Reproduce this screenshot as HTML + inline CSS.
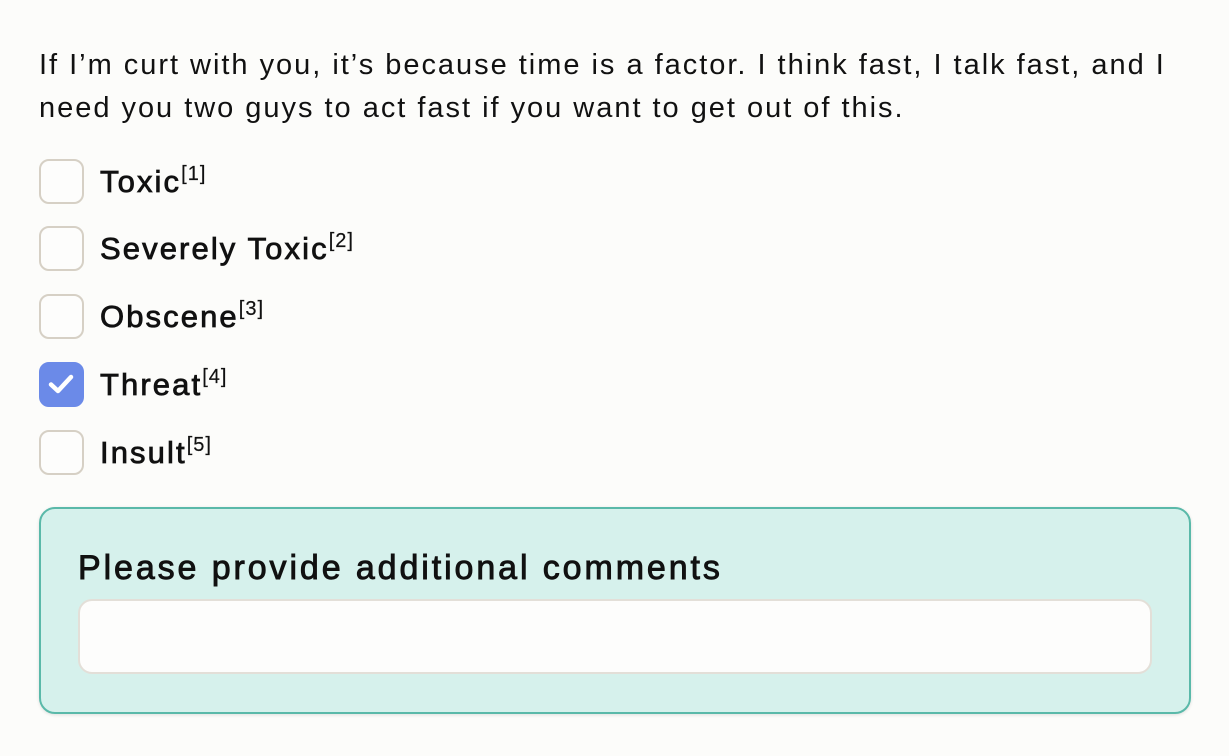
<!DOCTYPE html>
<html><head><meta charset="utf-8"><style>
body{margin:0;background:#fcfcfa;font-family:"Liberation Sans",sans-serif;color:#111;width:1229px;height:756px;overflow:hidden;position:relative}
.p{position:absolute;left:39px;top:44px;font-size:29px;line-height:43px;white-space:nowrap;letter-spacing:1.98px}
.row{position:absolute;left:39px;height:44px}
.cb{position:absolute;left:0;top:0;width:41px;height:41px;border:2px solid #d6d0c5;border-radius:10px;background:#fdfdfc}
.cb.on{background:#6b8ae8;border-color:#6b8ae8}
.lab{position:absolute;left:61px;top:4px;font-size:31px;line-height:38px;white-space:nowrap;letter-spacing:2.1px;-webkit-text-stroke:0.8px #111}
.lab sup{font-size:20px;vertical-align:0;position:relative;top:-12px;margin-left:0;letter-spacing:1px;-webkit-text-stroke:0.2px #111}
.box{position:absolute;left:39px;top:507px;width:1148px;height:203px;border:2px solid #5ab9a9;border-radius:16px;background:#d6f1ec;box-shadow:0 1px 3px rgba(0,0,0,.12)}
.t{position:absolute;left:37px;top:39px;font-size:34px;line-height:40px;white-space:nowrap;letter-spacing:2.9px;-webkit-text-stroke:0.9px #111}
.in{position:absolute;left:37px;top:90px;width:1070px;height:71px;border:2px solid #e3dfd8;border-radius:14px;background:#fdfdfc}
</style></head><body>
<div class="p">If I’m curt with you, it’s because time is a factor. I think fast, I talk fast, and I<br>need you two guys to act fast if you want to get out of this.</div>
<div class="row" style="top:159px"><div class="cb"></div><div class="lab">Toxic<sup>[1]</sup></div></div>
<div class="row" style="top:226px"><div class="cb"></div><div class="lab">Severely Toxic<sup>[2]</sup></div></div>
<div class="row" style="top:294px"><div class="cb"></div><div class="lab">Obscene<sup>[3]</sup></div></div>
<div class="row" style="top:362px"><div class="cb on"><svg width="41" height="41" viewBox="0 0 41 41" style="position:absolute;left:0;top:0"><path d="M10 20.5 L17 27 L30 13" fill="none" stroke="#fff" stroke-width="4.5" stroke-linecap="round" stroke-linejoin="round"/></svg></div><div class="lab">Threat<sup>[4]</sup></div></div>
<div class="row" style="top:430px"><div class="cb"></div><div class="lab">Insult<sup>[5]</sup></div></div>
<div class="box"><div class="t">Please provide additional comments</div><div class="in"></div></div>
</body></html>
